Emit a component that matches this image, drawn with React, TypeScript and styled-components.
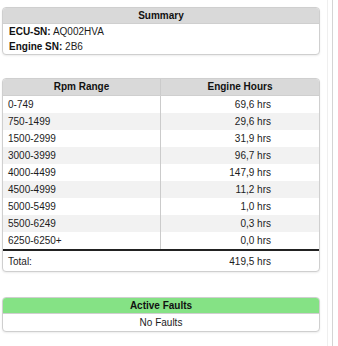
import React from "react";
import styled, { createGlobalStyle } from "styled-components";

const GlobalStyle = createGlobalStyle`
  html, body {
    margin: 0;
    padding: 0;
    background: #ffffff;
  }
  body {
    font-family: "Liberation Sans", Arial, Helvetica, sans-serif;
    font-size: 10px;
    color: #1c1c1c;
  }
`;

interface RpmBand {
    range: string;
    hours: string;
}

const rpmBands: RpmBand[] = [
    { range: "0-749", hours: "69,6 hrs" },
    { range: "750-1499", hours: "29,6 hrs" },
    { range: "1500-2999", hours: "31,9 hrs" },
    { range: "3000-3999", hours: "96,7 hrs" },
    { range: "4000-4499", hours: "147,9 hrs" },
    { range: "4500-4999", hours: "11,2 hrs" },
    { range: "5000-5499", hours: "1,0 hrs" },
    { range: "5500-6249", hours: "0,3 hrs" },
    { range: "6250-6250+", hours: "0,0 hrs" }
];

export default function App(): React.ReactElement {
    return (
        <>
            <GlobalStyle />
            <Page>
                <Content>
                    <Panel>
                        <PanelHeader>Summary</PanelHeader>
                        <InfoLine>
                            <b>ECU-SN:</b> AQ002HVA
                        </InfoLine>
                        <InfoLine>
                            <b>Engine SN:</b> 2B6
                        </InfoLine>
                    </Panel>

                    <Panel $gap={23}>
                        <HeadRow>
                            <HeadCell $divider>Rpm Range</HeadCell>
                            <HeadCell>Engine Hours</HeadCell>
                        </HeadRow>
                        {rpmBands.map((band, i) => (
                            <BandRow key={band.range} $striped={i % 2 === 1}>
                                <RangeCell>{band.range}</RangeCell>
                                <HoursCell>{band.hours}</HoursCell>
                            </BandRow>
                        ))}
                        <TotalRow>
                            <RangeCell $plain>Total:</RangeCell>
                            <HoursCell>419,5 hrs</HoursCell>
                        </TotalRow>
                    </Panel>

                    <Panel $gap={25}>
                        <PanelHeader $tone="green">Active Faults</PanelHeader>
                        <CenterLine>No Faults</CenterLine>
                    </Panel>
                </Content>
            </Page>
        </>
    );
}

const Page = styled.div`
    width: 333px;
    height: 346px;
    box-sizing: border-box;
    border-right: 1px solid #d4d4d4;
`;

const Content = styled.div`
    width: 328px;
    height: 100%;
    box-sizing: border-box;
    border-right: 1px solid #efefef;
    padding: 7px 7px 0 2px;
    display: flex;
    flex-direction: column;
`;

const Panel = styled.section<{ $gap?: number }>`
    margin-top: ${(p) => p.$gap ?? 0}px;
    border: 1px solid #cfcfcf;
    border-radius: 4px;
    overflow: hidden;
    box-shadow: 0 1px 2px rgba(0, 0, 0, 0.08);
    background: #ffffff;
`;

const PanelHeader = styled.div<{ $tone?: "grey" | "green" }>`
    height: 15px;
    line-height: 15px;
    text-align: center;
    font-weight: bold;
    color: #111;
    background: ${(p) => (p.$tone === "green" ? "#85e285" : "#d9d9d9")};
    border-bottom: 1px solid #cfcfcf;
`;

const InfoLine = styled.div`
    height: 15px;
    line-height: 15px;
    padding-left: 6px;

    b {
        color: #111;
    }
`;

const CenterLine = styled.div`
    height: 17px;
    line-height: 17px;
    text-align: center;
`;

const HeadRow = styled.div`
    display: grid;
    grid-template-columns: 1fr 1fr;
    height: 16px;
    background: #d9d9d9;
    border-bottom: 1px solid #cfcfcf;
`;

const HeadCell = styled.div<{ $divider?: boolean }>`
    line-height: 16px;
    text-align: center;
    font-weight: bold;
    color: #111;
    border-right: ${(p) => (p.$divider ? "1px solid #cbcbcb" : "none")};
`;

const BandRow = styled.div<{ $striped: boolean }>`
    display: grid;
    grid-template-columns: 1fr 1fr;
    height: 17px;
    background: ${(p) => (p.$striped ? "#f2f2f2" : "#ffffff")};
`;

const RangeCell = styled.div<{ $plain?: boolean }>`
    line-height: 17px;
    padding-left: 5px;
    border-right: ${(p) => (p.$plain ? "none" : "1px solid #cbcbcb")};
`;

const HoursCell = styled.div`
    line-height: 17px;
    text-align: right;
    padding-right: 48px;
`;

const TotalRow = styled.div`
    display: grid;
    grid-template-columns: 1fr 1fr;
    height: 20px;
    border-top: 2px solid #222;

    div {
        line-height: 21px;
    }
`;
